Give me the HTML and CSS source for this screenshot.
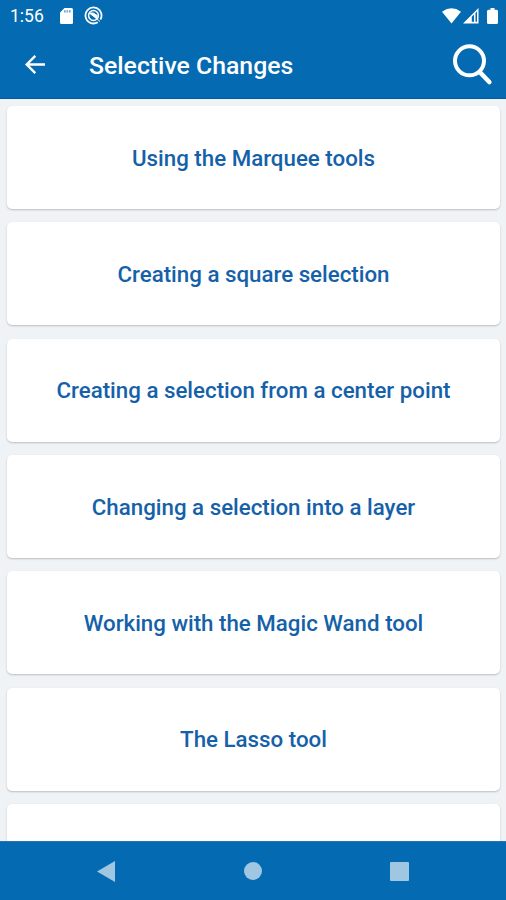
FILE: index.html
```html
<!DOCTYPE html>
<html lang="en">
<head>
    <meta charset="UTF-8">
    <meta name="viewport" content="width=device-width, initial-scale=1.0">
    <title>Selective Changes</title>
    <link rel="stylesheet" href="styles.css">
</head>
<body>

<div class="screen">
    <div class="status-bar">
        <span class="clock">1:56</span>
        <svg class="sd-icon" width="13" height="16" viewBox="0 0 13 16">
            <path d="M4.5 0H11.5Q13 0 13 1.5V14.5Q13 16 11.5 16H1.5Q0 16 0 14.5V4.5Z" fill="#fff"/>
            <path d="M4.8 2.2V4.6M7.3 2.2V4.6M9.8 2.2V4.6" stroke="#046ab2" stroke-width="1.6" opacity="0.6"/>
        </svg>
        <svg class="sync-icon" width="19" height="19" viewBox="0 0 19 19" fill="none" stroke="#fff">
            <path d="M13.8 16.2A8 8 0 1 1 16.4 13.5" stroke-width="1.8"/>
            <circle cx="9.5" cy="9.5" r="4.9" stroke-width="1.5"/>
            <path d="M5.5 7.2Q9.5 5.6 13.5 9.8L12 12.2ZM11.5 11.5L16 15.5" fill="#fff" stroke-width="1"/>
        </svg>
        <div class="status-right">
            <svg width="19" height="16" viewBox="0 0 19 16">
                <path d="M0 3.7Q9.5-3 19 3.7L9.5 15.5Z" fill="#fff"/>
            </svg>
            <svg width="16" height="16" viewBox="0 0 16 16">
                <path d="M0 15.5L15.5 0V15.5Z" fill="#fff"/>
                <path d="M8.8 8.8L11 6.6V13.8H8.8ZM12.5 5L14 3.5V13.8H12.5Z" fill="#046ab2"/>
            </svg>
            <svg class="battery-icon" width="11" height="16" viewBox="0 0 11 16">
                <path d="M3.5 0H7.5V1.7H9.5Q11 1.7 11 3.2V14.5Q11 16 9.5 16H1.5Q0 16 0 14.5V3.2Q0 1.7 1.5 1.7H3.5Z" fill="#fff"/>
            </svg>
        </div>
    </div>

    <header>
        <svg width="20" height="20" viewBox="0 0 20 20" fill="none" stroke="#fff" stroke-width="2.4">
            <path d="M20 9.5H1.7M10.3 .9L1.7 9.5L10.3 18.1"/>
        </svg>
        <h1>Selective Changes</h1>
        <svg class="search-icon" width="40" height="42" viewBox="0 0 40 42" fill="none" stroke="#fff">
            <circle cx="16.5" cy="16.8" r="14.5" stroke-width="4"/>
            <path d="M26.7 28L36.3 38" stroke-width="4.6" stroke-linecap="round"/>
        </svg>
    </header>

    <main class="lesson-list">
        <div class="card">Using the Marquee tools</div>
        <div class="card">Creating a square selection</div>
        <div class="card">Creating a selection from a center point</div>
        <div class="card">Changing a selection into a layer</div>
        <div class="card">Working with the Magic Wand tool</div>
        <div class="card">The Lasso tool</div>
        <div class="card"></div>
    </main>

    <nav class="nav-bar">
        <svg width="18" height="21" viewBox="0 0 18 21"><path d="M18 0V21L0 10.5Z"/></svg>
        <svg width="18" height="18" viewBox="0 0 18 18"><circle cx="9" cy="9" r="9"/></svg>
        <svg width="19" height="19" viewBox="0 0 19 19"><rect width="19" height="19" rx="1"/></svg>
    </nav>
</div>

</body>
</html>
```
FILE: styles.css
```css
* {
    margin: 0;
    padding: 0;
    box-sizing: border-box;
}

body {
    font-family: Roboto, sans-serif;
    background-color: #eff3f6;
}

svg {
    display: block;
    flex-shrink: 0;
}

.screen {
    display: flex;
    flex-direction: column;
    height: 900px;
    overflow: hidden;
}

.status-bar {
    display: flex;
    align-items: center;
    height: 32px;
    padding: 0 8px 1px 10px;
    background-color: #046ab2;
    color: #fff;
    flex-shrink: 0;
}

.clock {
    width: 50px;
    font-size: 17.5px;
}

.sync-icon {
    margin-left: 11px;
}

.status-right {
    display: flex;
    margin-left: auto;
}

.status-right svg {
    margin-left: 2px;
}

.status-right .battery-icon {
    margin-left: 8px;
}

header {
    display: flex;
    align-items: center;
    height: 67px;
    padding: 0 13px 0 25px;
    background-color: #046ab2;
    border-bottom: 1px solid #0659a0;
    color: #fff;
    flex-shrink: 0;
}

header h1 {
    margin-left: 44px;
    font-size: 24.8px;
    font-weight: 500;
}

.search-icon {
    margin-left: auto;
}

.lesson-list {
    flex: 1;
    min-height: 0;
    padding: 7px 6px 0 7px;
    overflow: hidden;
}

.card {
    display: flex;
    align-items: center;
    justify-content: center;
    height: 103px;
    margin-bottom: 13.35px;
    background-color: #fff;
    border-radius: 5px;
    box-shadow: 0 1px 2px rgba(0, 0, 0, 0.22);
    color: #1561a9;
    font-size: 22.3px;
    font-weight: 500;
}

.nav-bar {
    display: flex;
    align-items: center;
    justify-content: space-between;
    height: 59px;
    padding: 0 97px;
    background-color: #046ab2;
    border-top: 1px solid #2b70b8;
    flex-shrink: 0;
}

.nav-bar svg {
    fill: #9fc7e2;
}
```
